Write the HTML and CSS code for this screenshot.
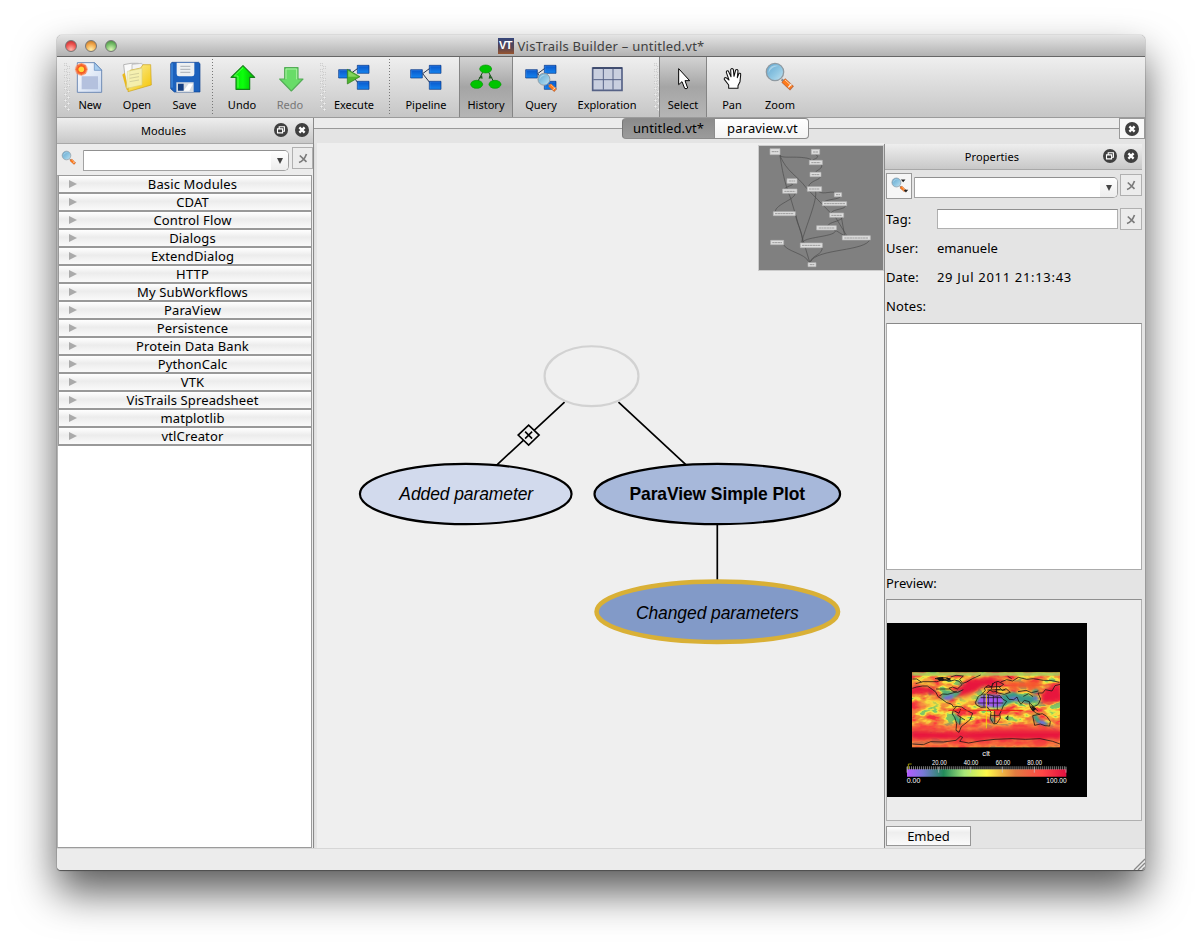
FILE: index.html
```html
<!DOCTYPE html>
<html lang="en">
<head>
<meta charset="utf-8">
<title>VisTrails Builder</title>
<link rel="stylesheet" href="styles.css">
</head>
<body>
<svg width="0" height="0" class="defs">
  <defs>
    <linearGradient id="blue" x1="0" y1="0" x2="0" y2="1"><stop offset="0" stop-color="#0a55c8"/><stop offset="1" stop-color="#1585f0"/></linearGradient>
    <linearGradient id="yel" x1="0" y1="0" x2="1" y2="1"><stop offset="0" stop-color="#fbf2a8"/><stop offset="1" stop-color="#f5c400"/></linearGradient>
    <linearGradient id="doc" x1="0" y1="0" x2="1" y2="1"><stop offset="0" stop-color="#ffffff"/><stop offset="1" stop-color="#c9d8f0"/></linearGradient>
    <linearGradient id="lens" x1="0" y1="0" x2="1" y2="1"><stop offset="0" stop-color="#5fa5cf"/><stop offset=".6" stop-color="#93c9e4"/><stop offset="1" stop-color="#c5e3f0"/></linearGradient>
    <linearGradient id="grn" x1="0" y1="0" x2="1" y2="0"><stop offset="0" stop-color="#00e000"/><stop offset=".5" stop-color="#0cff0c"/><stop offset="1" stop-color="#00b800"/></linearGradient>
    <radialGradient id="sun"><stop offset="0" stop-color="#fff27a"/><stop offset=".35" stop-color="#ffc93a"/><stop offset=".5" stop-color="#f4561f"/><stop offset=".75" stop-color="#f77a45"/><stop offset="1" stop-color="#f9a080" stop-opacity=".3"/></radialGradient>
    <symbol id="glass" viewBox="0 0 96 96">
      <path d="M53 55 60 62" stroke="#888" stroke-width="7"/>
      <path d="M58 58 84 82" stroke="#b9683f" stroke-width="17"/>
      <path d="M59 59 82 80" stroke="#ff7a1a" stroke-width="13"/>
      <path d="M63 57 83 75" stroke="#ffd0a0" stroke-width="3"/>
      <path d="M73 79 82 69" stroke="#eee" stroke-width="4"/>
      <circle cx="33" cy="33" r="26" fill="url(#lens)" stroke="#8f9aa2" stroke-width="4"/>
      <path d="M14 36C12 18 28 10 43 15 30 17 20 22 14 36Z" fill="#d5ebf5" opacity=".5"/>
    </symbol>
    <symbol id="flow" viewBox="0 0 96 96">
      <path d="M38 38 62 20M38 38 62 68" stroke="#26324c" stroke-width="3"/>
      <g fill="url(#blue)" stroke="#07347f" stroke-width="2"><path d="M2 26H37V51H2Z"/><path d="M58 13H93V37H58Z"/><path d="M58 61H93V85H58Z"/></g>
      <g fill="none" stroke="#50a4ff" stroke-width="1.5" opacity=".7"><path d="M4 49V28H35M60 35V15H91M60 83V63H91"/></g>
    </symbol>
    <symbol id="close" viewBox="0 0 14 14"><circle cx="7" cy="7" r="7" fill="#3f3f3f"/><path d="M4.4 4.4 9.6 9.6M9.6 4.4 4.4 9.6" stroke="#fff" stroke-width="2.3"/></symbol>
    <symbol id="float" viewBox="0 0 14 14"><circle cx="7" cy="7" r="7" fill="#3f3f3f"/><path d="M5.2 5.8V3.8H10.4V8.3H8.8M3.5 5.9H8.6V9.9H3.5Z" fill="none" stroke="#fff" stroke-width="1.1"/></symbol>
    <symbol id="clear" viewBox="0 0 12 12"><path d="M2 10.500C5 9.500 8 6 9.500 2M2.800 3.500 9.500 9.800" fill="none" stroke="#7c7c7c" stroke-width="1.700"/></symbol>
  </defs>
</svg>

<div class="window">
  <header class="titlebar">
    <div class="lights"><i class="red"></i><i class="amber"></i><i class="green"></i></div>
    <div class="title"><b class="logo">VT</b><span>VisTrails Builder – untitled.vt*</span></div>
  </header>

  <nav class="toolbar">
    <i class="grip g1"></i>
    <div class="tool w40"><svg viewBox="72 96 96 96"><path d="M82 101H134L155 123V190H82Z" fill="url(#doc)" stroke="#6f8bb5" stroke-width="3"/><path d="M95 142H144V181H95Z" fill="#b4c1de"/><path d="M133 101V124H155Z" fill="#a6ccee" stroke="#5f86bb" stroke-width="2"/><circle cx="94" cy="121" r="20" fill="url(#sun)"/><path d="M94 103V139M76 121H112M81 108 107 134M107 108 81 134" stroke="#f65b1e" stroke-width="3" opacity=".55"/><circle cx="94" cy="121" r="8" fill="#ffd83c"/></svg><span>New</span></div>
    <div class="tool w54"><svg viewBox="213 96 96 96"><path d="M221 107 243 103H265V170L229 176Z" fill="#fafafa" stroke="#999" stroke-width="2"/><path d="M246 106 275 103 285 120V165H246Z" fill="#f3f3f3" stroke="#aaa" stroke-width="2"/><path d="M217 137 224 131 237 187 229 181Z" fill="#eab91c"/><path d="M272 117 279 107H302L304 168 234 188 240 124Z" fill="url(#yel)" stroke="#cba11d" stroke-width="2"/><path d="M232 127 276 118 276 168 230 178Z" fill="#f5f3bb" stroke="#d3cf90" stroke-width="2" opacity=".85"/><path d="M239 138 267 133M239 148 267 143M239 158 267 153" stroke="#d4d09a" stroke-width="3"/></svg><span>Open</span></div>
    <div class="tool w41"><svg viewBox="355 96 96 96"><path d="M364 100H444L448 104V189H371L360 179V104Z" fill="#1c61bd" stroke="#0c3f8f" stroke-width="2"/><path d="M364 103V176" stroke="#4f9be8" stroke-width="3"/><path d="M378 101H431V135Q431 142 424 142H385Q378 142 378 135Z" fill="#edf0f2"/><path d="M389 112H419M389 121H419M389 130H419" stroke="#b6bbc1" stroke-width="4"/><path d="M377 160H429V189H377Z" fill="#d7dce2"/><path d="M382 164H399V185H382Z" fill="#143f82"/><path d="M399 185 414 164H427L416 185Z" fill="#fff"/></svg><span>Save</span></div>
    <i class="dots w14"></i>
    <div class="tool w46"><svg viewBox="528 96 96 96"><path d="M579 110 614 145H599V181H558V145H543Z" fill="url(#grn)" stroke="#16801a" stroke-width="3.5" stroke-linejoin="round"/><path d="M579 116 553 141H564V176" fill="none" stroke="#8dff7c" stroke-width="2"/></svg><span>Undo</span></div>
    <div class="tool w50 dim"><svg viewBox="672 96 96 96"><path d="M724 186 689 150H704V116H744V150H759Z" fill="#68dc68" stroke="#54ad57" stroke-width="3.5" stroke-linejoin="round"/><path d="M708 150V120H740V151" fill="none" stroke="#abf0a4" stroke-width="3"/></svg><span>Redo</span></div>
    <i class="grip g2"></i>
    <div class="tool w56"><svg viewBox="54 96 96 96"><use href="#flow" x="54" y="96" width="96" height="96"/><path d="M82 121 120 143 82 165Z" fill="#4fb52e" stroke="#2c7c1b" stroke-width="2"/><path d="M85 126 114 143 85 143Z" fill="#85d45f"/></svg><span>Execute</span></div>
    <i class="dots w15"></i>
    <div class="tool w58"><svg viewBox="0 0 96 96"><use href="#flow" width="96" height="96"/></svg><span>Pipeline</span></div>
    <div class="tool on history"><svg viewBox="450 96 96 96"><path d="M488 130 473 158M506 130 521 158" stroke="#144a14" stroke-width="3"/><path d="M476 147 486 138 488 149ZM518 147 508 138 506 149Z" fill="#245f24"/><g fill="#00c400" stroke="#0a930a" stroke-width="2"><ellipse cx="497" cy="120" rx="18" ry="12"/><ellipse cx="470" cy="166" rx="18" ry="12"/><ellipse cx="525" cy="166" rx="18" ry="12"/></g></svg><span>History</span></div>
    <div class="tool w56"><svg viewBox="0 0 96 96"><use href="#flow" width="96" height="96"/><use href="#glass" x="31" y="32" width="72" height="66"/></svg><span>Query</span></div>
    <div class="tool w76"><svg viewBox="93 96 96 96"><path d="M98 117H186V184H98Z" fill="#c9cfdf" stroke="#566286" stroke-width="5"/><path d="M98 117H186" stroke="#303c61" stroke-width="5"/><path d="M130 119V182M159 119V182M100 152H184" stroke="#566286" stroke-width="3"/></svg><span>Exploration</span></div>
    <i class="grip g3"></i>
    <div class="tool on w48"><svg viewBox="321 96 96 96"><path d="M356 119V167L366 158 374 178Q378 181 383 177L375 155H389Z" fill="#fff" stroke="#000" stroke-width="3"/></svg><span>Select</span></div>
    <div class="tool w50"><svg viewBox="468 96 96 96"><path d="M506 178V168L493 151Q492 145 498 146L507 153 499 130Q499 124 505 126L513 143 512 122Q515 115 520 121L522 142 527 123Q532 119 534 125L532 146 537 133Q543 131 542 138L540 158 534 170V178Z" fill="#fff" stroke="#111" stroke-width="3.2" stroke-linejoin="round"/></svg><span>Pan</span></div>
    <div class="tool w46"><svg viewBox="0 0 96 96"><use href="#glass" width="96" height="96"/></svg><span>Zoom</span></div>
  </nav>

  <main class="content">
    <aside class="modules">
      <div class="dockhead"><span>Modules</span><svg><use href="#float"/></svg><svg><use href="#close"/></svg></div>
      <div class="search">
        <svg class="mag"><use href="#glass"/></svg>
        <div class="combo"><i></i></div>
        <button class="clear"><svg><use href="#clear"/></svg></button>
      </div>
      <ul class="tree">
        <li>Basic Modules</li><li>CDAT</li><li>Control Flow</li><li>Dialogs</li><li>ExtendDialog</li><li>HTTP</li><li>My SubWorkflows</li><li>ParaView</li><li>Persistence</li><li>Protein Data Bank</li><li>PythonCalc</li><li>VTK</li><li>VisTrails Spreadsheet</li><li>matplotlib</li><li>vtlCreator</li>
      </ul>
    </aside>

    <section class="work">
      <div class="tabs">
        <div class="tab active">untitled.vt*</div><div class="tab">paraview.vt</div>
        <button class="tabclose"><svg><use href="#close"/></svg></button>
      </div>
      <div class="panes">
        <div class="canvas">
          <svg class="graph" viewBox="317 143 568 705">
            <g stroke="#000" stroke-width="1.7"><path d="M565 402 497 465M619 402 687 465M718 524V581"/></g>
            <ellipse cx="592" cy="376" rx="47" ry="30" fill="#f0f0f0" stroke="#d2d2d2" stroke-width="2.2"/>
            <path d="M529 425 539.500 435 529 445 518.500 435Z" fill="#efefef" stroke="#000" stroke-width="1.6"/>
            <path d="M525.500 431.500 532.500 438.500M532.500 431.500 525.500 438.500" stroke="#000" stroke-width="1.6"/>
            <ellipse cx="466" cy="494" rx="106" ry="30.200" fill="#d2daed" stroke="#000" stroke-width="2.2"/>
            <ellipse cx="718" cy="494" rx="123" ry="30.200" fill="#a7b8da" stroke="#000" stroke-width="2.2"/>
            <ellipse cx="718" cy="612" rx="121" ry="30.300" fill="#829ac8" stroke="#d9b036" stroke-width="4.500"/>
            <g font-size="17.500" text-anchor="middle">
              <text x="466.500" y="500" font-style="italic" textLength="134">Added parameter</text>
              <text x="718" y="500" font-weight="bold" textLength="176">ParaView Simple Plot</text>
              <text x="718" y="619" font-style="italic" textLength="163">Changed parameters</text>
            </g>
          </svg>
          <svg class="thumb" viewBox="24 90 378 378">
            <g fill="none" stroke="#4c4c4c" stroke-width="2">
              <path d="M90 120C92 130 120 125 150 127 165 128 178 130 183 134M90 122C110 170 140 180 170 220L240 292M90 122C100 190 110 220 122 250L180 445M196 118C210 125 200 130 188 135M213 148C222 160 200 165 196 172M210 184C215 195 180 195 175 216M122 205C140 210 110 212 103 222M136 234C135 255 80 265 75 290M196 228C205 250 165 340 155 382M137 300C140 330 160 350 157 384M206 230C220 240 250 225 258 235M272 243C270 255 230 250 218 264M286 270C290 285 250 280 243 294M278 307C270 320 240 320 233 332M256 306 290 362M274 306 284 362M252 346C260 345 275 360 290 364M256 346C260 365 170 365 160 380M100 388C110 410 165 415 176 440M216 396C220 420 185 420 180 442M360 372C350 410 200 400 182 440"/>
            </g>
            <g fill="#dedede" stroke="#b4b4b4" stroke-width="2" stroke-linejoin="round">
              <path d="M60 101H90V119H60ZM184 103H209V118H184ZM178 136H217V149H178ZM180 172H213V185H180ZM111 191H141V205H111ZM98 222H141V235H98ZM172 215H215V229H172ZM253 233H275V245H253ZM217 260H290V272H217ZM70 290H136V302H70ZM239 294H281V307H239ZM200 332H259V345H200ZM277 362H361V375H277ZM62 376H101V389H62ZM151 384H217V398H151ZM174 443H198V455H174Z"/>
            </g>
            <path d="M65 110H85M189 111H204M184 143H211M185 179H208M116 198H136M103 229H136M177 222H209M258 239H270M222 266H285M75 296H131M244 301H276M206 339H253M283 369H355M67 383H96M156 391H211M179 449H193" stroke="#8c8c8c" stroke-width="2.500" stroke-dasharray="7 1"/>
          </svg>
        </div>

        <aside class="props">
          <div class="dockhead"><span>Properties</span><svg><use href="#float"/></svg><svg><use href="#close"/></svg></div>
          <div class="propsearch">
            <button class="magbtn"><svg viewBox="0 0 26 26"><use href="#glass" x="4" y="3" width="18" height="18"/><path d="M15 6H20L17.500 9ZM18 17H23L20.500 20Z" fill="#222"/></svg></button>
            <div class="combo"><i></i></div>
            <button class="clear"><svg><use href="#clear"/></svg></button>
          </div>
          <div class="tagrow"><label>Tag:</label><div class="field"></div><button class="clear"><svg><use href="#clear"/></svg></button></div>
          <div class="info"><label>User:</label><span>emanuele</span></div>
          <div class="info"><label>Date:</label><span class="date">29 Jul 2011 21:13:43</span></div>
          <div class="info"><label>Notes:</label></div>
          <div class="notes"></div>
          <div class="plabel">Preview:</div>
          <div class="preview">
            <svg viewBox="21 99 600 522">
              <defs>
                <filter id="cloud" x="0" y="0" width="100%" height="100%" color-interpolation-filters="sRGB">
                  <feTurbulence type="fractalNoise" baseFrequency=".022 .045" numOctaves="3" seed="8"/>
                  <feColorMatrix values="2.400 0 0 0 -.72  2.400 0 0 0 -.72  2.400 0 0 0 -.72  0 0 0 0 1"/>
                  <feComponentTransfer>
                    <feFuncR type="table" tableValues=".5 .9 1 .97 .95 .95 1 .95"/>
                    <feFuncG type="table" tableValues=".78 .92 .87 .7 .55 .48 .3 .2"/>
                    <feFuncB type="table" tableValues=".4 .28 .25 .22 .22 .25 .24 .25"/>
                  </feComponentTransfer>
                </filter>
                <filter id="soft"><feGaussianBlur stdDeviation="6"/></filter>
                <filter id="soft2"><feGaussianBlur stdDeviation="2.500"/></filter>
                <linearGradient id="scale"><stop offset="0" stop-color="#b45cff"/><stop offset=".1" stop-color="#7878d8"/><stop offset=".23" stop-color="#228b5a"/><stop offset=".36" stop-color="#a8e878"/><stop offset=".5" stop-color="#fff84a"/><stop offset=".68" stop-color="#e27c40"/><stop offset=".85" stop-color="#ff4646"/><stop offset="1" stop-color="#e01040"/></linearGradient>
                <clipPath id="map"><path d="M96 247H540V472H96Z"/></clipPath>
              </defs>
              <path d="M21 99H621V621H21Z" fill="#000"/>
              <g clip-path="url(#map)">
                <path d="M96 247H540V472H96Z" filter="url(#cloud)"/>
                <g filter="url(#soft)" fill="#e8183e">
                  <path d="M90 290 160 288 180 322 130 310 90 316Z"/><path d="M225 300 260 270 330 260 380 275 360 292 310 292 260 325 215 320Z"/><path d="M90 418 240 426 380 414 546 418V450H90Z"/><path d="M490 295 546 278V330L480 345Z"/>
                  <path d="M385 272H480V296H390Z" fill="#f5522f"/><path d="M90 402H546V420H90ZM90 452H546V476H90Z" fill="#f8503c" opacity=".75"/>
                  <path d="M100 265H160V280H100ZM110 335 210 322 200 340 120 355ZM245 322 290 310 280 335 240 345Z" fill="#f8d43f" opacity=".7"/>
                </g>
                <path d="M96 247H540V257H96Z" fill="#a2cd61" filter="url(#soft2)"/>
                <g filter="url(#soft2)">
                  <path d="M189 300 222 306 247 301 232 319 209 331 182 328Z" fill="#50a879"/><path d="M190 322 221 312 217 326 195 331Z" fill="#766bd6"/>
                  <path d="M286 335 304 313 365 314 386 310 400 306 430 317 472 317 475 330 450 342 430 338 404 335 379 344 365 354 318 352 300 349Z" fill="#379988"/>
                  <path d="M292 340 304 318 362 316 370 336 358 350 318 350Z" fill="#a257f3"/><path d="M386 323 410 320 418 331 395 330ZM455 325 472 320 474 333Z" fill="#6f68cf"/>
                  <path d="M213 364 229 376 238 382 243 397 238 405 228 394ZM329 384 339 380 344 394 334 399ZM457 378 470 374 480 390 505 400 501 407 470 399ZM455 303 470 296 478 306 460 312Z" fill="#37a481"/><path d="M471 397 488 391 501 399 488 405Z" fill="#5e78dc"/>
                </g>
                <g fill="none" stroke="#161313" stroke-width="2.300">
                  <path d="M97 295 110 291 128 288 142 288 158 299 168 307 174 320 188 329 200 338 214 342 221 351 231 349 245 351 258 360 278 370 270 389 258 399 244 410 237 427 228 421 230 400 224 382 217 372 220 359 230 350M168 297H210L219 304 233 307 250 299M178 318 188 312 203 313 218 309 230 305M207 295 218 291 232 297 246 284 238 274 224 270 206 274 194 268 170 275 129 275 107 281M97 267H110L124 276M165 266 180 262 203 264 212 271 188 270 166 266M185 272 211 268M212 261 228 256 250 258 239 268 248 280 260 276 277 266 302 255"/>
                  <path d="M286 338 295 319 309 312 330 315 346 319 360 317 369 328 380 334 370 347 365 360 359 372 361 384 351 400 341 402 331 385 333 367 322 351 303 352 289 345ZM304 313 316 302 313 294 325 286 334 291 342 278 354 274 371 283 358 292 367 302 378 296 391 307 373 313 355 309 349 304 339 306 330 300 320 310M378 316 387 328 401 329 411 321 416 333 423 343 433 331 448 335 450 349 458 362 452 348 464 349 475 343 482 327 474 309 488 309 496 299 516 303 525 287 540 283M362 276 380 269 398 273 415 262 440 268 460 266 490 271 517 272 538 277M383 259 395 266M379 385 384 377 383 390Z"/>
                  <path d="M450 351 467 369 480 373M458 377 473 374 487 371 500 379 511 394 509 408 495 407 481 402 464 406ZM414 305 438 301 454 308 475 303M430 319 446 311 459 320M302 323H366M312 315V350M325 315V345M340 318V352M352 320V360M294 339H370M327 360H358M332 376H358M344 359V401M220 361 237 370 242 357M232 375 255 390M241 380 239 404M338 279 334 298M350 277 349 311M317 292 363 289M322 300 360 299M346 299 376 300M451 340 473 363"/>
                  <path d="M97 462 130 464 152 455 190 456 228 451 241 439 248 442 239 454 266 459 300 453 345 448 396 446 436 448 480 446 518 454 540 462"/>
                </g>
                <path d="M170 264 188 261 193 269 178 273ZM196 263 213 265 206 271ZM455 348 469 356 459 365Z" fill="#161313"/>
                <path d="M205 361H425" stroke="#f41e14" stroke-width="2.500"/><path d="M319 312V415" stroke="#f9e300" stroke-width="2.500"/><path d="M319 361H430" stroke="#f41e14" stroke-width="2.500"/>
              </g>
              <path d="M81 538H559V560H81Z" fill="url(#scale)"/>
              <path d="M81 534H559" stroke="#ccc" stroke-width="10" stroke-dasharray="1.800 4.180"/>
              <path d="M81 530V548M176 530V548M272 530V548M367 530V548M463 530V548M558 530V548" stroke="#ccc" stroke-width="2"/>
              <path d="M85 537V522H95" fill="none" stroke="#ded000" stroke-width="2"/>
              <g font-size="19" lengthAdjust="spacingAndGlyphs">
                <text x="307" y="498" textLength="23" lengthAdjust="spacingAndGlyphs">clt</text>
                <text x="156" y="525" textLength="44" lengthAdjust="spacingAndGlyphs">20.00</text><text x="251" y="525" textLength="44" lengthAdjust="spacingAndGlyphs">40.00</text><text x="347" y="525" textLength="44" lengthAdjust="spacingAndGlyphs">60.00</text><text x="442" y="525" textLength="44" lengthAdjust="spacingAndGlyphs">80.00</text>
                <g font-size="21"><text x="80" y="580" textLength="41" lengthAdjust="spacingAndGlyphs">0.00</text><text x="499" y="580" textLength="61" lengthAdjust="spacingAndGlyphs">100.00</text></g>
              </g>
            </svg>
          </div>
          <button class="embed">Embed</button>
        </aside>
      </div>
    </section>
  </main>
  <footer class="status"><svg viewBox="0 0 12 12"><path d="M1 12 12 1M5 12 12 5M9 12 12 9" stroke="#888" stroke-width="1.300"/></svg></footer>
</div>
</body>
</html>
```
FILE: styles.css
```css
* { box-sizing: border-box; }
body { margin: 0; height: 949px; padding: 35px 57px 0 57px; overflow: hidden; background: #fff; font: 13px/18px "Noto Sans", "Open Sans", sans-serif; color: #000; }
svg { display: block; fill: none; }
button { appearance: none; padding: 0; margin: 0; font: inherit; color: #000; }
.defs { position: absolute; }
.window { width: 1088px; height: 835px; display: flex; flex-direction: column; border-radius: 5px 5px 4px 4px; background: #ececec; overflow: hidden; box-shadow: 0 0 1px rgba(0,0,0,.65), 0 1px 1px #555, 0 22px 42px rgba(0,0,0,.65); }

.titlebar { height: 22px; flex: none; display: grid; grid-template-columns: 80px 1fr 80px; align-items: center; border-bottom: 1px solid #666; background: linear-gradient(#e4e4e4, #b2b2b2); }
.lights { display: flex; gap: 8px; padding-left: 8px; }
.lights i { width: 12px; height: 12px; border-radius: 50%; border: 1px solid #777; }
.red { background: radial-gradient(circle at 50% 85%, #ffb9ae, #ee5450 55%, #b3262c); }
.amber { background: radial-gradient(circle at 50% 85%, #fff0a9, #f2a74c 55%, #b56d1d); }
.green { background: radial-gradient(circle at 50% 85%, #dbf7b5, #78bf6b 55%, #3d8535); }
.title { display: flex; justify-content: center; align-items: center; gap: 4px; color: #404040; font-size: 13px; letter-spacing: .24px; }
.logo { width: 16px; height: 16px; font: bold 11px/15px "Liberation Sans", sans-serif; letter-spacing: -.5px; color: #fff; text-align: center; background: linear-gradient(#36467a, #574452 60%, #98552f); }

.toolbar { height: 61px; flex: none; display: flex; border-bottom: 1px solid #9b9b9b; background: linear-gradient(#efefef, #c6c6c6); font-size: 11px; }
.tool { flex: none; height: 60px; padding-top: 4px; display: flex; flex-direction: column; align-items: center; }
.tool svg { width: 32px; height: 32px; flex: none; }
.tool span { line-height: 16px; margin-top: 4px; white-space: nowrap; }
.tool.dim span { color: #777; }
.tool.on { background: linear-gradient(#d3d3d3, #a5a5a5 50%, #b5b5b5); box-shadow: inset 1px 0 #858585, inset -1px 0 #858585; }
.history { width: 54px; margin-left: 4px; }
.w14 { width: 14px; } .w15 { width: 15px; } .w40 { width: 40px; } .w41 { width: 41px; } .w46 { width: 46px; } .w48 { width: 48px; } .w50 { width: 50px; } .w54 { width: 54px; } .w56 { width: 56px; } .w58 { width: 58px; } .w76 { width: 76px; }
.grip { flex: none; width: 6px; height: 48px; margin-top: 6px; background: radial-gradient(circle at 1.5px 1.5px, #eee .8px, rgba(175,175,175,.5) 1.5px, transparent 2px) 0 0 / 6px 6px, radial-gradient(circle at 4.500px 4.500px, #eee .8px, rgba(175,175,175,.5) 1.5px, transparent 2px) 0 0 / 6px 6px; }
.g1 { margin-left: 7px; } .g2 { margin-left: 5px; } .g3 { margin-left: 9px; width: 5px; }
.dots { flex: none; height: 56px; margin-top: 2px; background: repeating-linear-gradient(#777 0 1px, transparent 1px 3px) 7px 0 / 1px 100% no-repeat; }

.content { flex: 1; min-height: 0; display: flex; }
.modules { width: 257px; flex: none; display: flex; flex-direction: column; border-right: 1px solid #8a8a8a; }
.dockhead { height: 26px; flex: none; display: flex; align-items: center; gap: 7px; padding-right: 4px; border-bottom: 1px solid #a8a8a8; background: linear-gradient(#eee, #c8c8c8); font-size: 11px; }
.dockhead span { flex: 1; text-align: center; padding-left: 3px; letter-spacing: .1px; }
.dockhead svg { width: 14px; height: 14px; margin-top: -2px; }
.search { height: 31px; flex: none; display: flex; align-items: flex-start; padding: 3px 0 0 4px; }
.mag { width: 16px; height: 16px; margin-top: 3px; }
.combo { height: 21px; border: 1px solid #a2a2a2; border-top-color: #909090; border-radius: 0 5px 5px 0; background: #fff; display: flex; justify-content: flex-end; }
.combo i { width: 17px; border-radius: 0 4px 4px 0; background: linear-gradient(#fff, #ededed); display: grid; place-items: center; }
.combo i::after { content: ""; border: 3.500px solid transparent; border-top: 6px solid #444; border-bottom: 0; }
.search .combo { width: 206px; margin: 3px 3px 0 6px; }
.clear { width: 22px; height: 22px; flex: none; border: 1px solid #b0b0b0; background: #ececec; display: grid; place-items: center; }
.search .clear { width: 21px; }
.clear svg { width: 12px; height: 12px; }
.tree { flex: 1; margin: 0 1px 0 0; padding: 0; list-style: none; background: #fff; border: 1px solid #9b9b9b; border-left-color: #b5b5b5; }
.tree li { height: 18px; display: grid; grid-template-columns: 8px 1fr; padding: 0 3px 0 10px; text-align: center; line-height: 16px; letter-spacing: .14px; border: 1px solid #999; border-width: 0 1px 2px; margin: 0 -1px 0 0; background: linear-gradient(#fff, #ececec 45%, #fafafa); }
.tree li::before { content: ""; margin-top: 4px; width: 0; height: 0; border: 4px solid transparent; border-left: 8px solid #aaa; border-right: 0; }

.work { flex: 1; min-width: 0; display: flex; flex-direction: column; background: #e4e4e4; }
.tabs { height: 26px; flex: none; display: flex; align-items: flex-start; background: linear-gradient(#ececec 10px, #999 10px 11px, #e4e4e4 11px); padding-left: 308px; }
.tab { width: 94px; height: 21px; text-align: center; line-height: 19px; border: 1px solid #8c8c8c; border-left: 0; border-radius: 0 4px 4px 0; background: linear-gradient(#fff, #f3f3f3); letter-spacing: .15px; padding-left: 2px; }
.tab.active { width: 93px; padding-left: 0; border-left: 1px solid #777; border-radius: 4px 0 0 4px; background: linear-gradient(#8b8b8b, #9b9b9b); }
.tabclose { margin-left: auto; width: 26px; height: 21px; border: 1px solid #999; background: #f8f8f8; display: grid; place-items: center; }
.tabclose svg { width: 14px; height: 14px; }
.panes { flex: 1; min-height: 0; display: flex; }
.canvas { width: 571px; flex: none; position: relative; padding-left: 2px; border-right: 1px solid #8a8a8a; border-left: 1px solid #ddd; }
.graph { width: 567px; height: 705px; margin-top: -1px; background: #efefef; font-family: "Liberation Sans", sans-serif; }
.graph text { fill: #000; }
.thumb { position: absolute; right: 0; top: 1px; width: 126px; height: 126px; background: #808080; outline: 1px solid #ccc; outline-offset: -1px; }

.props { flex: 1; min-width: 0; display: flex; flex-direction: column; padding: 0 3px 0 1px; }
.props .dockhead { margin-left: -1px; }
.propsearch { display: flex; height: 30px; flex: none; padding-top: 3px; }
.magbtn { width: 26px; height: 26px; flex: none; border: 1px solid #999; background: #f6f6f6; }
.magbtn svg { width: 24px; height: 24px; }
.propsearch .combo { width: 204px; margin: 4px 2px 0; }
.propsearch .clear { margin-top: 1px; }
.tagrow { height: 34px; flex: none; display: flex; padding-top: 8px; line-height: 22px; }
.tagrow label, .info label { width: 51px; flex: none; letter-spacing: .1px; }
.field { width: 182px; height: 20px; margin-right: 2px; margin-top: 1px; border: 1px solid #b0b0b0; border-top-color: #8f8f8f; background: #fff; }
.info { height: 29px; flex: none; display: flex; line-height: 28px; }
.date { letter-spacing: .68px; }
.info:has(+ .notes) { height: 31px; }
.notes { height: 247px; flex: none; border: 1px solid #ababab; border-top-color: #888; background: #fff; }
.plabel { height: 29px; flex: none; line-height: 27px; }
.preview { height: 222px; flex: none; border: 1px solid #b0b0b0; border-top-color: #8f8f8f; background: #ececec; padding-top: 23px; }
.preview svg { width: 200px; height: 174px; font-family: "Liberation Sans", sans-serif; }
.preview text { fill: #fff; }
.embed { width: 85px; height: 20px; margin-top: 5px; flex: none; line-height: 17px; border: 1px solid #969696; background: linear-gradient(#fff, #eee 30%, #fafafa); }
.status { height: 22px; flex: none; display: flex; align-items: flex-end; justify-content: flex-end; border-top: 1px solid #d6d6d6; background: #ececec; }
.status svg { width: 12px; height: 12px; }
```
